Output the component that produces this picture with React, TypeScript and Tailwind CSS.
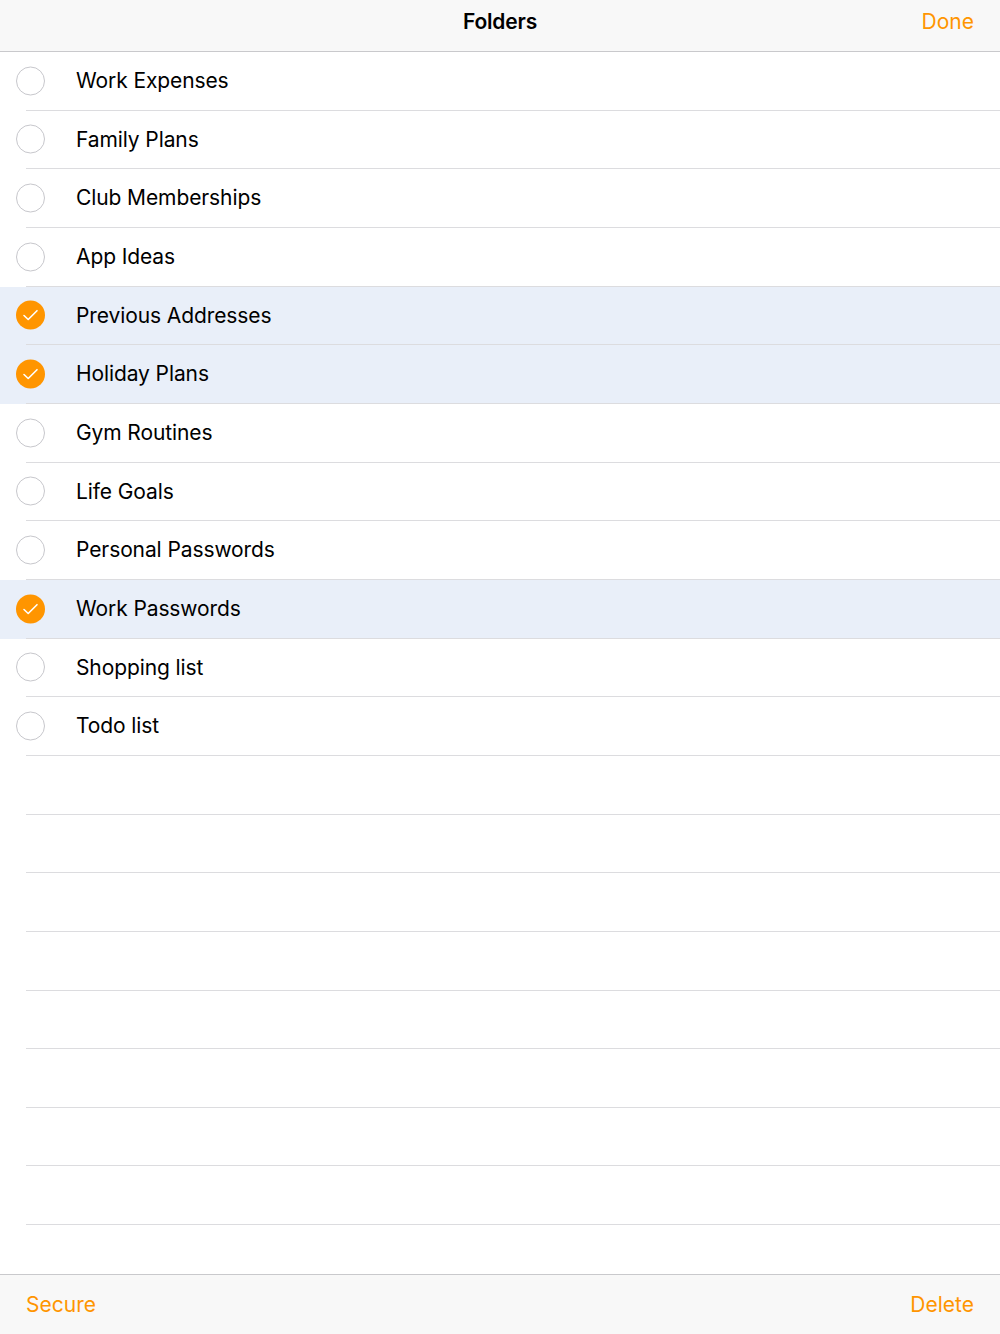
const folders = [
  { name: "Work Expenses", selected: false },
  { name: "Family Plans", selected: false },
  { name: "Club Memberships", selected: false },
  { name: "App Ideas", selected: false },
  { name: "Previous Addresses", selected: true },
  { name: "Holiday Plans", selected: true },
  { name: "Gym Routines", selected: false },
  { name: "Life Goals", selected: false },
  { name: "Personal Passwords", selected: false },
  { name: "Work Passwords", selected: true },
  { name: "Shopping list", selected: false },
  { name: "Todo list", selected: false },
];

function CheckCircle({ checked }: { checked: boolean }) {
  if (checked) {
    return (
      <div className="w-[29px] h-[29px] rounded-full bg-[#ff9500] flex items-center justify-center">
        <svg width="29" height="29" viewBox="0 0 29 29" fill="none">
          <path
            d="M8 15 L12.2 19 L21 10.2"
            stroke="white"
            strokeWidth="1.6"
            strokeLinecap="round"
            strokeLinejoin="round"
          />
        </svg>
      </div>
    );
  }
  return <div className="w-[29px] h-[29px] rounded-full border-[1.5px] border-[#c7c7cc]" />;
}

export default function App() {
  return (
    <div
      className="w-[1000px] h-[1334px] bg-white flex flex-col overflow-hidden"
      style={{ fontFamily: "Inter, 'Noto Sans', sans-serif" }}
    >
      {/* Nav bar */}
      <header className="h-[52px] shrink-0 bg-[#f8f8f8] border-b border-[#c9c9cc] flex justify-center pt-[8px] relative">
        <h1 className="text-[21px] leading-[28px] font-semibold text-black tracking-[-0.2px]">Folders</h1>
        <button className="absolute right-[26px] top-[8px] text-[21px] leading-[28px] text-[#ff9500]">Done</button>
      </header>

      {/* List */}
      <div className="flex-1 flex flex-col">
        {folders.map((f) => (
          <div
            key={f.name}
            className={`h-[58.67px] shrink-0 flex ${f.selected ? "bg-[#e9eff9]" : "bg-white"}`}
          >
            <div className="w-[26px] shrink-0" />
            <div className="flex-1 flex items-center border-b border-[#dcdcdf] relative">
              <div className="absolute left-[-10px] top-1/2 -translate-y-1/2">
                <CheckCircle checked={f.selected} />
              </div>
              <span className="ml-[50px] text-[21px] text-black tracking-[-0.1px]">{f.name}</span>
            </div>
          </div>
        ))}
        {Array.from({ length: 8 }).map((_, i) => (
          <div key={i} className="h-[58.67px] shrink-0 flex">
            <div className="w-[26px] shrink-0" />
            <div className="flex-1 border-b border-[#dcdcdf]" />
          </div>
        ))}
      </div>

      {/* Toolbar */}
      <footer className="h-[60px] shrink-0 bg-[#f8f8f8] border-t border-[#c9c9cc] flex items-center justify-between px-[26px]">
        <button className="text-[21px] text-[#ff9500]">Secure</button>
        <button className="text-[21px] text-[#ff9500]">Delete</button>
      </footer>
    </div>
  );
}
